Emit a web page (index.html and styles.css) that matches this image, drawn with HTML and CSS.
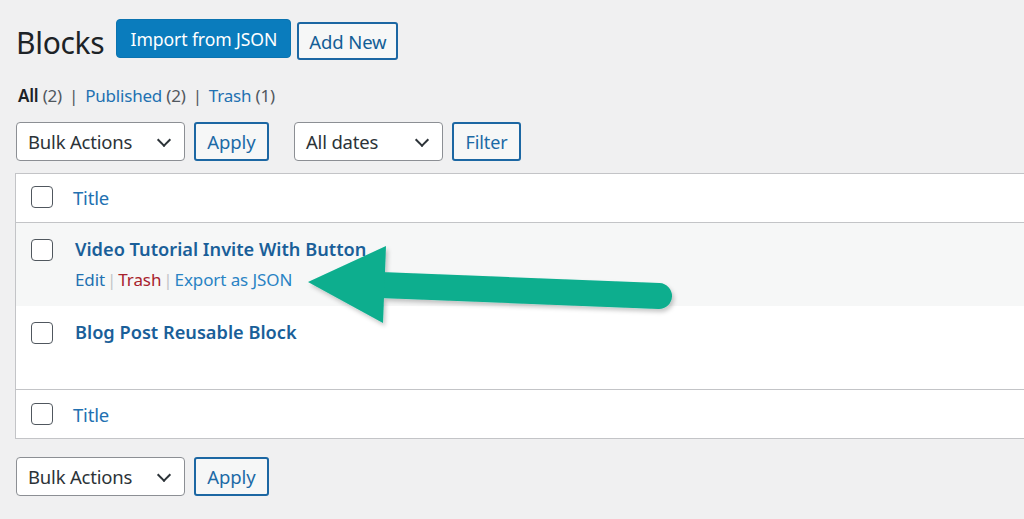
FILE: index.html
```html
<!DOCTYPE html>
<html>
<head>
<meta charset="utf-8">
<link rel="stylesheet" href="styles.css">
</head>
<body>
<div class="wrap">
  <div class="page-head">
    <h1 class="page-title">Blocks</h1>
    <a class="btn btn-primary">Import from JSON</a>
    <a class="btn btn-secondary btn-add">Add New</a>
  </div>

  <ul class="subsub">
    <li><span class="current">All</span> <span class="count">(2)</span></li>
    <li class="sep">|</li>
    <li><a>Published</a> <span class="count">(2)</span></li>
    <li class="sep">|</li>
    <li><a>Trash</a> <span class="count">(1)</span></li>
  </ul>

  <div class="tablenav">
    <div class="select select-bulk">Bulk Actions<span class="chev"></span></div>
    <a class="btn btn-secondary btn-apply">Apply</a>
    <div class="select select-dates">All dates<span class="chev"></span></div>
    <a class="btn btn-secondary btn-filter">Filter</a>
  </div>

  <table class="list">
    <thead>
      <tr class="row-head">
        <td class="cb"><span class="checkbox"></span></td>
        <td class="col-title"><a>Title</a></td>
      </tr>
    </thead>
    <tbody>
      <tr class="row row-alt">
        <td class="cb"><span class="checkbox"></span></td>
        <td class="col-title">
          <a class="row-title">Video Tutorial Invite With Button</a>
          <div class="row-actions">
            <a>Edit</a><span class="bar">|</span><a class="trash">Trash</a><span class="bar">|</span><a class="export">Export as JSON</a>
          </div>
        </td>
      </tr>
      <tr class="row">
        <td class="cb"><span class="checkbox"></span></td>
        <td class="col-title">
          <a class="row-title">Blog Post Reusable Block</a>
        </td>
      </tr>
    </tbody>
    <tfoot>
      <tr class="row-foot">
        <td class="cb"><span class="checkbox"></span></td>
        <td class="col-title"><a>Title</a></td>
      </tr>
    </tfoot>
  </table>

  <div class="tablenav tablenav-bottom">
    <div class="select select-bulk">Bulk Actions<span class="chev"></span></div>
    <a class="btn btn-secondary btn-apply">Apply</a>
  </div>
</div>

<svg class="arrow" width="1024" height="519" viewBox="0 0 1024 519">
  <defs>
    <filter id="sh" x="-10%" y="-30%" width="130%" height="170%">
      <feDropShadow dx="2" dy="3" stdDeviation="2" flood-color="#000" flood-opacity="0.22"/>
    </filter>
  </defs>
  <g filter="url(#sh)">
    <line x1="380" y1="285" x2="659" y2="296" stroke="#0aae8e" stroke-width="26" stroke-linecap="round"/>
    <polygon points="308,282 386,246 383,323" fill="#0aae8e"/>
  </g>
</svg>
</body>
</html>
```

FILE: styles.css
```css
html, body {
  margin: 0;
  padding: 0;
}
body {
  background: #f0f0f1;
  font-family: "Noto Sans", "Open Sans", sans-serif;
  color: #1d2327;
  width: 1024px;
  height: 519px;
  overflow: hidden;
  position: relative;
}
a { text-decoration: none; }

.wrap {
  padding: 19px 0 0 15px;
}

.page-head {
  display: flex;
  align-items: flex-start;
  height: 40px;
}
.page-title {
  margin: 4px 12px 0 1px;
  font-size: 30px;
  font-weight: 400;
  line-height: 40px;
  letter-spacing: -0.3px;
  color: #1d2327;
}

.btn {
  box-sizing: border-box;
  display: inline-flex;
  align-items: center;
  justify-content: center;
  font-size: 18px;
  border-radius: 4px;
  white-space: nowrap;
  letter-spacing: -0.1px;
}
.btn-primary {
  width: 175px;
  height: 39px;
  font-size: 17.6px;
  background: #0a7cbd;
  color: #fff;
  border: 1px solid #0a73b0;
}
.btn-secondary {
  background: #f6f7f7;
  color: #1c6aa6;
  border: 2px solid #1c67a3;
  border-radius: 3px;
}
.btn-add {
  width: 101px;
  height: 38px;
  margin: 3px 0 0 6px;
  font-size: 18.5px;
  color: #135e96;
}

.subsub {
  list-style: none;
  display: flex;
  margin: 25px 0 0 3px;
  padding: 0;
  font-size: 17px;
  line-height: 24px;
  color: #50575e;
  letter-spacing: -0.2px;
}
.subsub li { white-space: pre; }
.subsub .sep { margin: 0 7px; color: #50575e; }
.subsub a { color: #2271b1; }
.subsub .current { color: #1d2327; font-weight: 600; }
.subsub .count { color: #50575e; }

.tablenav {
  display: flex;
  align-items: center;
  margin-top: 14px;
  height: 39px;
}
.select {
  box-sizing: border-box;
  height: 39px;
  background: #fff;
  border: 1.5px solid #8c8f94;
  border-radius: 4px;
  display: flex;
  align-items: center;
  padding-left: 11px;
  font-size: 18.5px;
  color: #2c3338;
  position: relative;
  letter-spacing: -0.2px;
}
.select-bulk { width: 169px; margin-left: 1px; }
.select-dates { width: 149px; margin-left: 25px; }
.chev {
  position: absolute;
  right: 15px;
  top: 12px;
  width: 8px;
  height: 8px;
  border-right: 2px solid #2c3338;
  border-bottom: 2px solid #2c3338;
  transform: rotate(45deg);
}
.btn-apply {
  width: 75px;
  height: 39px;
  margin-left: 9px;
  font-size: 18.5px;
}
.btn-filter {
  width: 69px;
  height: 39px;
  margin-left: 9px;
  font-size: 18px;
}

.list {
  margin-top: 12px;
  width: 1030px;
  border-collapse: collapse;
  background: #fff;
  border: 1px solid #c3c4c7;
  border-right: none;
}
.list td {
  padding: 0;
  vertical-align: top;
}
.cb {
  width: 57px;
}
.checkbox {
  display: block;
  box-sizing: border-box;
  width: 22px;
  height: 22px;
  border: 1.5px solid #50575e;
  border-radius: 4px;
  background: #fff;
  margin-left: 15px;
}
.row-head td, .row-foot td { height: 48px; vertical-align: middle; }
.row-head td { padding-bottom: 2px; height: 46px; }
.row-head { border-bottom: 1px solid #c3c4c7; }
.row-foot { border-top: 1px solid #c3c4c7; }
.col-title a {
  color: #2271b1;
  font-size: 18.5px;
  letter-spacing: -0.2px;
}
.row td { height: 70px; }
.row .cb { padding-top: 13px; }
.row .checkbox { margin-top: 3px; }
.row-alt { background: #f6f7f7; }
.row .col-title { padding-top: 13px; padding-left: 2px; }
.row-title {
  display: block;
  font-weight: 600;
  font-size: 18.2px !important;
  line-height: 26px;
  color: #1a5f99 !important;
  letter-spacing: 0 !important;
}
.row-actions {
  margin-top: 6px;
  font-size: 17px;
  line-height: 24px;
  letter-spacing: -0.1px;
}
.row-actions a { font-size: 17px !important; color: #2271b1; letter-spacing: -0.1px !important; }
.row-actions .bar { color: #c3c4c7; margin: 0 2px; }
.row-actions .trash { color: #a8222c !important; }
.row-actions .export { color: #2983c4 !important; }

.tablenav-bottom { margin-top: 18px; }

.arrow {
  position: absolute;
  left: 0;
  top: 0;
  pointer-events: none;
}
```
